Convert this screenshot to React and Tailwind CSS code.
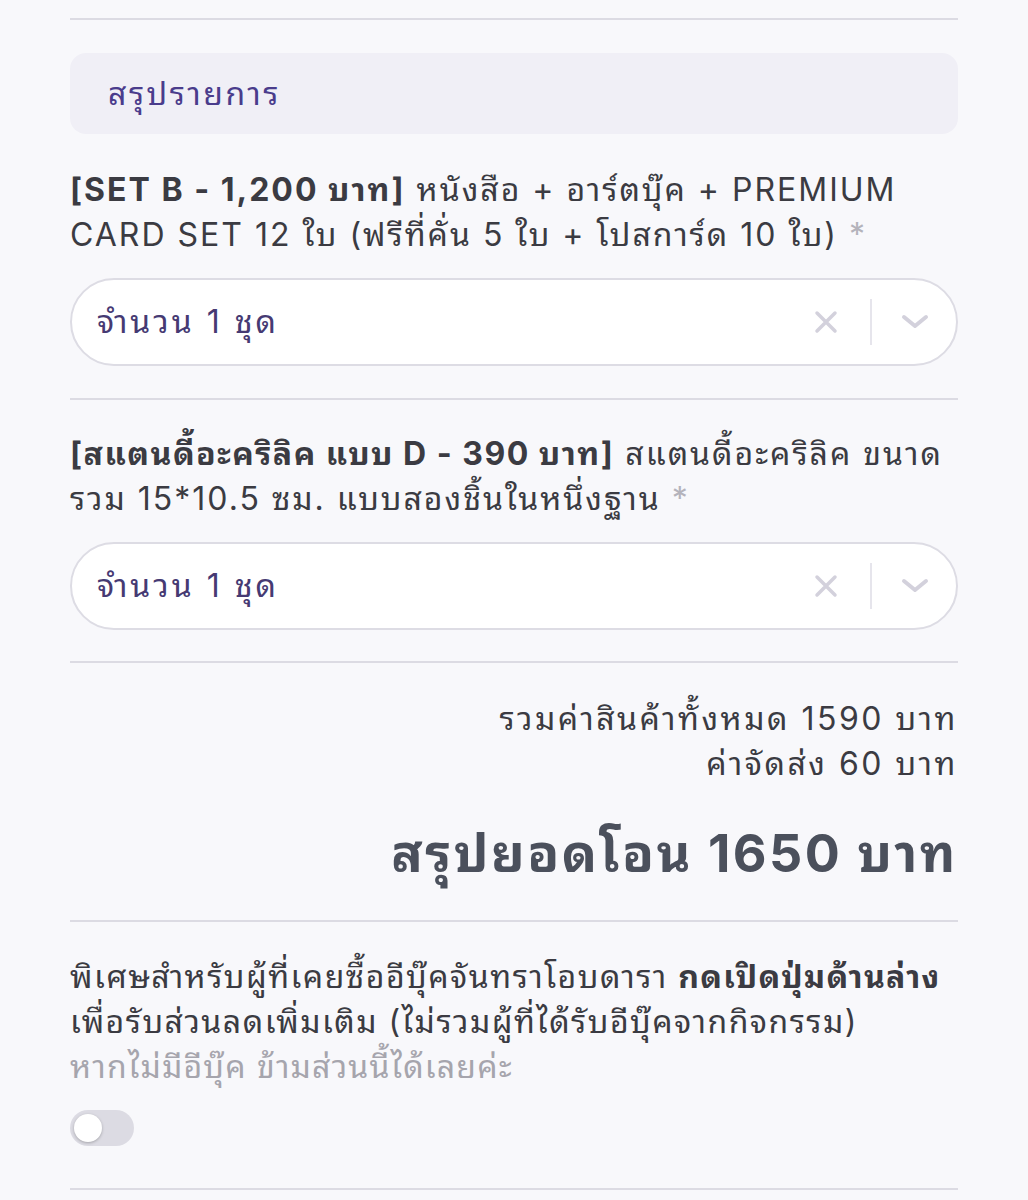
import React from "react";

const font = { fontFamily: 'Inter, "Noto Sans Thai Looped", Waree, Loma, Garuda, "Noto Sans Thai", "Noto Sans", "Liberation Sans", sans-serif' };

function Select() {
  return (
    <div className="flex items-center h-[88px] rounded-full border-2 border-[#dddce4] bg-white pl-[25px] pr-[26px]">
      <div className="flex-1 text-[32px] tracking-[3px] text-[#463a73]">จำนวน 1 ชุด</div>
      <svg width="24" height="24" viewBox="0 0 24 24" className="mr-[32px]">
        <path d="M3 3 L21 21 M21 3 L3 21" stroke="#d3d1dc" strokeWidth="3.5" strokeLinecap="round" />
      </svg>
      <div className="w-[2px] h-[46px] bg-[#e6e5ec]" />
      <svg width="30" height="18" viewBox="0 0 30 18" className="ml-[28px]">
        <path d="M4 4 L15 13 L26 4" stroke="#d3d1dc" strokeWidth="4" fill="none" strokeLinecap="round" strokeLinejoin="round" />
      </svg>
    </div>
  );
}

export default function App() {
  return (
    <div className="min-h-[1200px] w-[1028px] bg-[#f8f8fb] overflow-hidden" style={font}>
      <div className="px-[70px] pt-[18px]">
        <div className="h-[2px] bg-[#dcdbe3]" />
        <div className="mt-[33px] h-[81px] rounded-[16px] bg-[#f0eff6] flex items-center pl-[38px]">
          <span className="text-[32px] tracking-[2.5px] text-[#4a3c8c]">สรุปรายการ</span>
        </div>
        <div className="mt-[33px] text-[32px] tracking-[2px] leading-[45px] text-[#3b3b42]">
          <span className="font-bold tracking-[2px]">[SET B - 1,200 บาท]</span> หนังสือ + อาร์ตบุ๊ค + PREMIUM CARD SET 12 ใบ (ฟรีที่คั่น 5 ใบ + โปสการ์ด 10 ใบ) <span className="text-[#b4b3bb]">*</span>
        </div>
        <div className="mt-[21px]">
          <Select />
        </div>
        <div className="mt-[32px] h-[2px] bg-[#dcdbe3]" />
        <div className="mt-[31px] text-[32px] tracking-[2px] leading-[45px] text-[#3b3b42]">
          <span className="font-bold tracking-[1.5px]">[สแตนดี้อะคริลิค แบบ D - 390 บาท]</span> สแตนดี้อะคริลิค ขนาด รวม 15*10.5 ซม. แบบสองชิ้นในหนึ่งฐาน <span className="text-[#b4b3bb]">*</span>
        </div>
        <div className="mt-[21px]">
          <Select />
        </div>
        <div className="mt-[31px] h-[2px] bg-[#dcdbe3]" />
        <div className="mt-[33px] text-right text-[32px] tracking-[2.5px] leading-[45px] text-[#3b3b42]">
          <div>รวมค่าสินค้าทั้งหมด 1590 บาท</div>
          <div>ค่าจัดส่ง 60 บาท</div>
        </div>
        <div className="mt-[33px] text-right text-[52px] tracking-[2.5px] leading-[70px] font-bold text-[#4b505c]">
          สรุปยอดโอน 1650 บาท
        </div>
        <div className="mt-[31px] h-[2px] bg-[#dcdbe3]" />
        <div className="mt-[32px] text-[32px] tracking-[1.5px] leading-[45px] text-[#3b3b42]">
          พิเศษสำหรับผู้ที่เคยซื้ออีบุ๊คจันทราโอบดารา <span className="font-bold tracking-[1.3px]">กดเปิดปุ่มด้านล่าง</span> เพื่อรับส่วนลดเพิ่มเติม (ไม่รวมผู้ที่ได้รับอีบุ๊คจากกิจกรรม)
        </div>
        <div className="text-[32px] tracking-[1.2px] leading-[45px] text-[#a6a5ad]">หากไม่มีอีบุ๊ค ข้ามส่วนนี้ได้เลยค่ะ</div>
        <div className="mt-[21px] w-[64px] h-[36px] rounded-full bg-[#dcdbe3] flex items-center pl-[4px]">
          <div className="w-[28px] h-[28px] rounded-full bg-white shadow-[0_1px_3px_rgba(0,0,0,0.25)]" />
        </div>
        <div className="mt-[42px] h-[2px] bg-[#dcdbe3]" />
      </div>
    </div>
  );
}
